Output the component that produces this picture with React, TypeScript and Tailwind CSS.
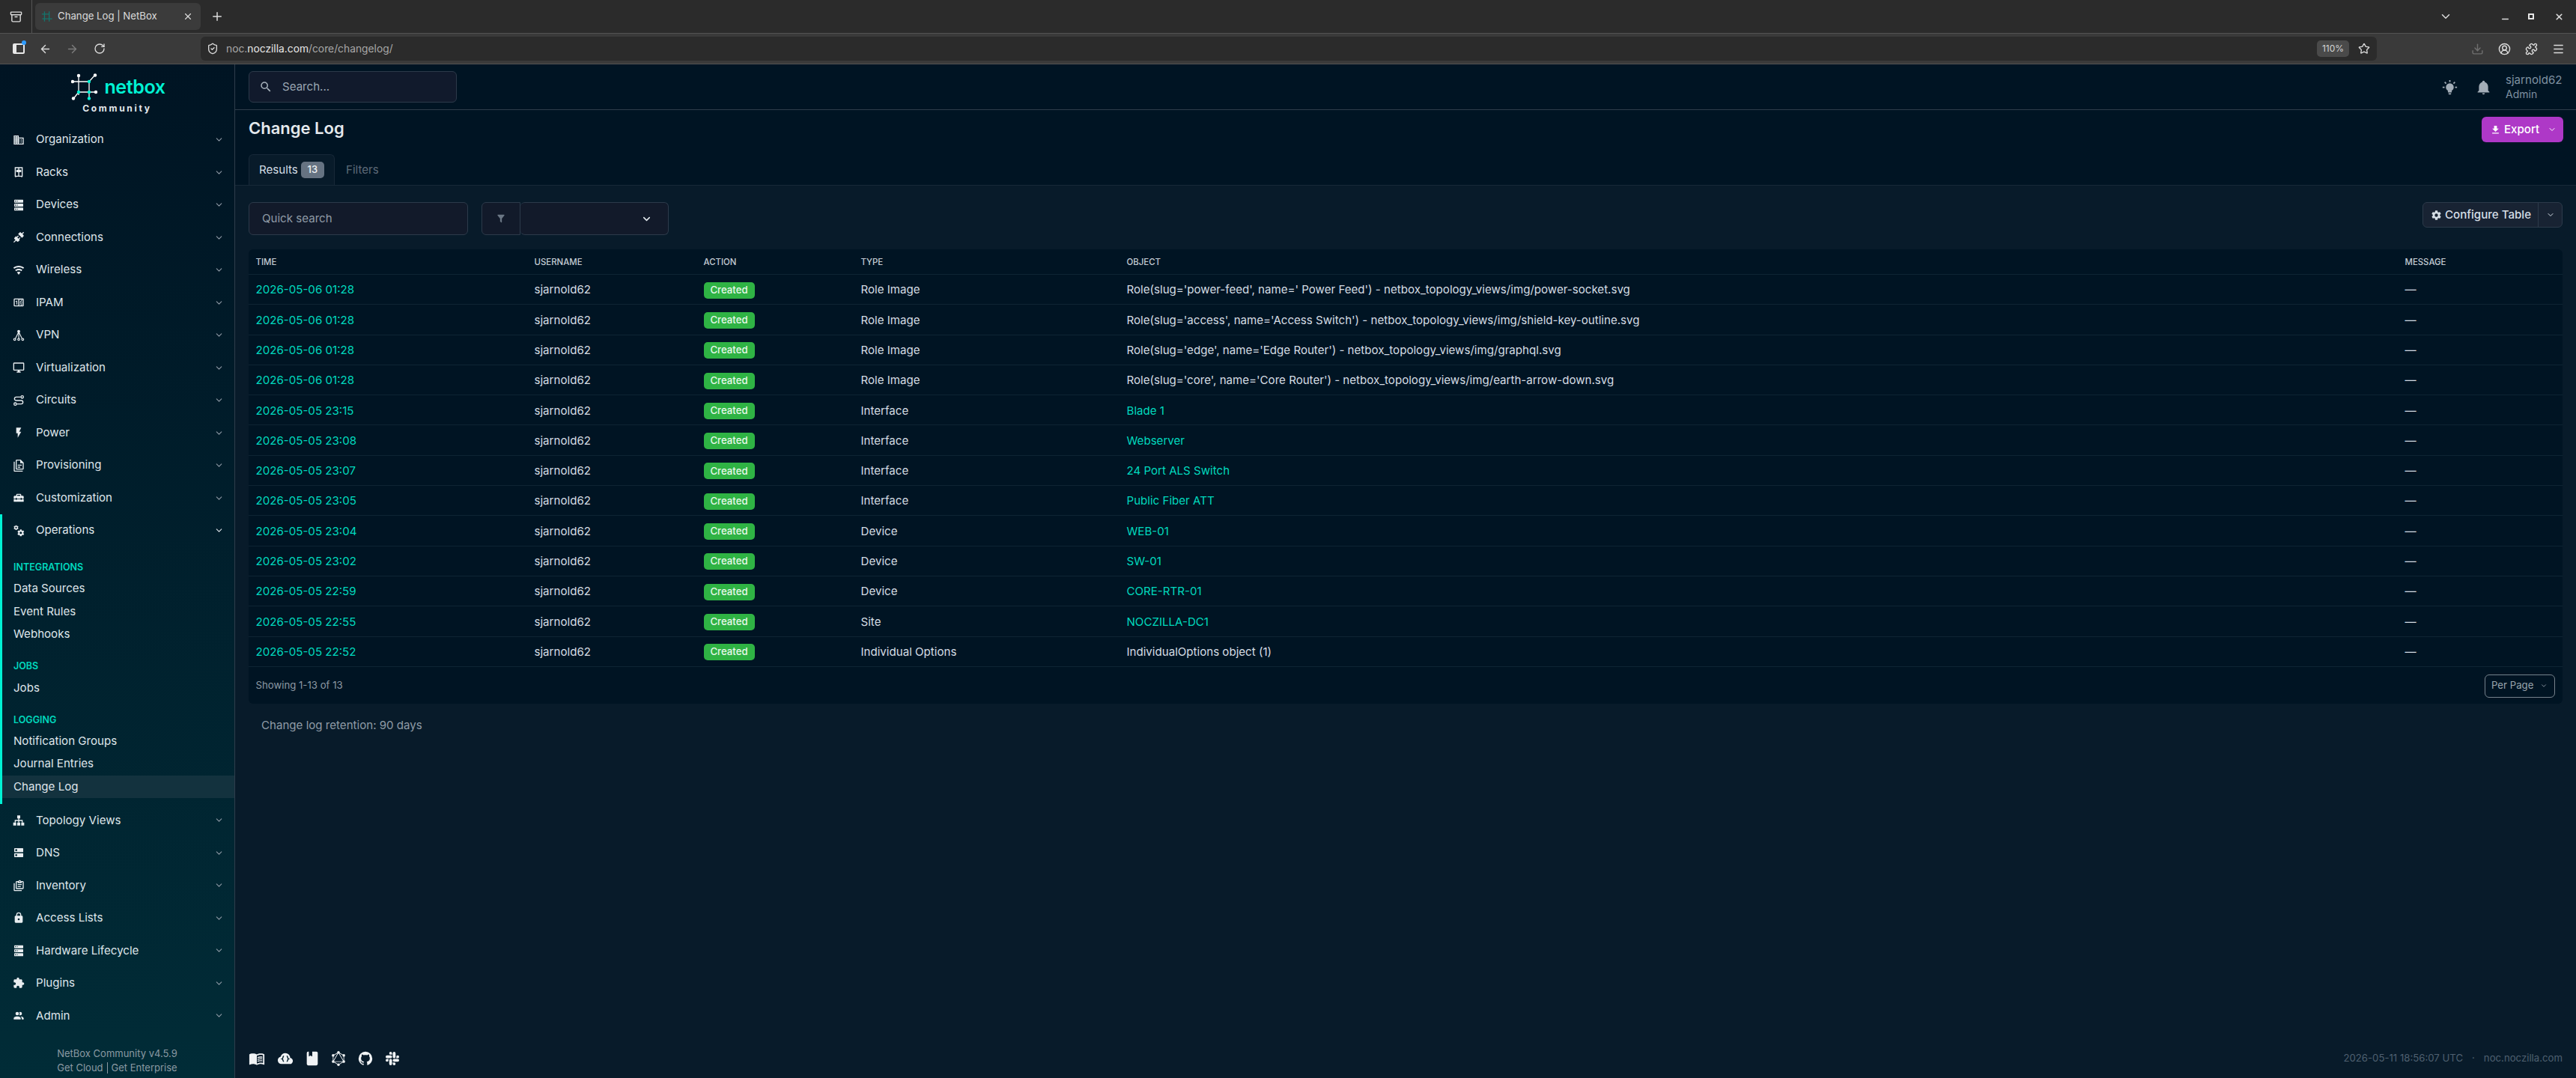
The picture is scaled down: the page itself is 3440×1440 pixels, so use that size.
import { ChevronDown, ArrowLeft, ArrowRight, RotateCw, Plus, X, Star, Download, CircleUserRound, Puzzle, Menu, ShieldCheck, Archive, Minus } from "lucide-react";
import { SiGraphql, SiSlack } from "react-icons/si";

const P = {
  domain: "M18,15H16V17H18M18,11H16V13H18M20,19H12V17H14V15H12V13H14V11H12V9H20M10,7H8V5H10M10,11H8V9H10M10,15H8V13H10M10,19H8V17H10M6,7H4V5H6M6,11H4V9H6M6,15H4V13H6M6,19H4V17H6M12,7V3H2V21H22V7H12Z",
  server: "M4,1H20A1,1 0 0,1 21,2V6A1,1 0 0,1 20,7H4A1,1 0 0,1 3,6V2A1,1 0 0,1 4,1M4,9H20A1,1 0 0,1 21,10V14A1,1 0 0,1 20,15H4A1,1 0 0,1 3,14V10A1,1 0 0,1 4,9M4,17H20A1,1 0 0,1 21,18V22A1,1 0 0,1 20,23H4A1,1 0 0,1 3,22V18A1,1 0 0,1 4,17M9,5H10V3H9V5M9,13H10V11H9V13M9,21H10V19H9V21M5,3V5H7V3H5M5,11V13H7V11H5M5,19V21H7V19H5Z",
  connection: "M21.4 7.5C22.2 8.3 22.2 9.6 21.4 10.3L18.6 13.1L10.8 5.3L13.6 2.5C14.4 1.7 15.7 1.7 16.4 2.5L18.2 4.3L21.2 1.3L22.6 2.7L19.6 5.7L21.4 7.5M15.6 13.3L14.2 11.9L11.4 14.7L9.3 12.6L12.1 9.8L10.7 8.4L7.9 11.2L6.4 9.8L3.6 12.6C2.8 13.4 2.8 14.7 3.6 15.4L5.4 17.2L1.4 21.2L2.8 22.6L6.8 18.6L8.6 20.4C9.4 21.2 10.7 21.2 11.4 20.4L14.2 17.6L12.8 16.2L15.6 13.3Z",
  wifi: "M12,21L15.6,16.2C14.6,15.45 13.35,15 12,15C10.65,15 9.4,15.45 8.4,16.2L12,21M12,3C7.95,3 4.21,4.34 1.2,6.6L3,9C5.5,7.12 8.62,6 12,6C15.38,6 18.5,7.12 21,9L22.8,6.6C19.79,4.34 16.05,3 12,3M12,9C9.3,9 6.81,9.89 4.8,11.4L6.6,13.8C8.1,12.67 9.97,12 12,12C14.03,12 15.9,12.67 17.4,13.8L19.2,11.4C17.19,9.89 14.7,9 12,9Z",
  counter: "M4,4H20A2,2 0 0,1 22,6V18A2,2 0 0,1 20,20H4A2,2 0 0,1 2,18V6A2,2 0 0,1 4,4M4,6V18H11V6H4M20,18V6H18.76C19,6.54 18.95,7.07 18.95,7.13C18.88,7.8 18.41,8.5 18.24,8.75L15.91,11.3L19.23,11.28L19.24,12.5L14.04,12.47L14,11.47C14,11.47 17.05,8.24 17.2,7.95C17.34,7.67 17.91,6 16.5,6C15.27,6.05 15.41,7.3 15.41,7.3L13.87,7.31C13.87,7.31 13.88,6.65 14.25,6H13V18H15.58L15.57,17.14L16.54,17.13C16.54,17.13 17.45,16.97 17.46,16.08C17.5,15.08 16.65,15.08 16.5,15.08C16.37,15.08 15.43,15.13 15.43,15.95H13.91C13.91,15.95 13.95,13.89 16.5,13.89C19.1,13.89 18.96,15.91 18.96,15.91C18.96,15.91 19,17.16 17.85,17.63L18.37,18H20M8.92,16H7.42V10.2L5.62,10.76V9.53L8.76,8.41H8.92V16Z",
  monitor: "M21,16H3V4H21M21,2H3C1.89,2 1,2.89 1,4V16A2,2 0 0,0 3,18H10V20H8V22H16V20H14V18H21A2,2 0 0,0 23,16V4C23,2.89 22.1,2 21,2Z",
  flash: "M7,2V13H10V22L17,10H13L17,2H7Z",
  files: "M16 0H8C6.9 0 6 .9 6 2V18C6 19.1 6.9 20 8 20H20C21.1 20 22 19.1 22 18V6L16 0M20 18H8V2H15V7H20V18M4 4V22H20V24H4C2.9 24 2 23.1 2 22V4H4M10 10V12H18V10H10M10 14V16H15V14H10Z",
  toolbox: "M18 16H16V15H8V16H6V15H2V20H22V15H18V16M20 8H17V6C17 4.9 16.1 4 15 4H9C7.9 4 7 4.9 7 6V8H4C2.9 8 2 8.9 2 10V14H6V12H8V14H16V12H18V14H22V10C22 8.9 21.1 8 20 8M15 8H9V6H15V8Z",
  dns: "M7,9A2,2 0 0,1 5,7A2,2 0 0,1 7,5A2,2 0 0,1 9,7A2,2 0 0,1 7,9M20,3H4A1,1 0 0,0 3,4V10A1,1 0 0,0 4,11H20A1,1 0 0,0 21,10V4A1,1 0 0,0 20,3M7,19A2,2 0 0,1 5,17A2,2 0 0,1 7,15A2,2 0 0,1 9,17A2,2 0 0,1 7,19M20,13H4A1,1 0 0,0 3,14V20A1,1 0 0,0 4,21H20A1,1 0 0,0 21,20V14A1,1 0 0,0 20,13Z",
  clipboard: "M4 7V21H18V23H4C2.9 23 2 22.1 2 21V7H4M20 3C21.1 3 22 3.9 22 5V17C22 18.1 21.1 19 20 19H8C6.9 19 6 18.1 6 17V5C6 3.9 6.9 3 8 3H11.18C11.6 1.84 12.7 1 14 1C15.3 1 16.4 1.84 16.82 3H20M14 3C13.45 3 13 3.45 13 4C13 4.55 13.45 5 14 5C14.55 5 15 4.55 15 4C15 3.45 14.55 3 14 3M10 7V5H8V17H20V5H18V7H10M18 11H10V9H18V11M16 15H10V13H16V15Z",
  lock: "M12,17A2,2 0 0,0 14,15C14,13.89 13.1,13 12,13A2,2 0 0,0 10,15A2,2 0 0,0 12,17M18,8A2,2 0 0,1 20,10V20A2,2 0 0,1 18,22H6A2,2 0 0,1 4,20V10C4,8.89 4.9,8 6,8H7V6A5,5 0 0,1 12,1A5,5 0 0,1 17,6V8H18M12,3A3,3 0 0,0 9,6V8H15V6A3,3 0 0,0 12,3Z",
  puzzle: "M20.5,11H19V7C19,5.89 18.1,5 17,5H13V3.5A2.5,2.5 0 0,0 10.5,1A2.5,2.5 0 0,0 8,3.5V5H4A2,2 0 0,0 2,7V10.8H3.5C5,10.8 6.2,12 6.2,13.5C6.2,15 5,16.2 3.5,16.2H2V20A2,2 0 0,0 4,22H7.8V20.5C7.8,19 9,17.8 10.5,17.8C12,17.8 13.2,19 13.2,20.5V22H17A2,2 0 0,0 19,20V16H20.5A2.5,2.5 0 0,0 23,13.5A2.5,2.5 0 0,0 20.5,11Z",
  people: "M16 17V19H2V17S2 13 9 13 16 17 16 17M12.5 7.5A3.5 3.5 0 1 0 9 11A3.5 3.5 0 0 0 12.5 7.5M15.94 13A5.32 5.32 0 0 1 18 17V19H22V17S22 13.37 15.94 13M15 4A3.39 3.39 0 0 0 13.07 4.59A5 5 0 0 1 13.07 10.41A3.39 3.39 0 0 0 15 11A3.5 3.5 0 0 0 15 4Z",
  cog: "M12,15.5A3.5,3.5 0 0,1 8.5,12A3.5,3.5 0 0,1 12,8.5A3.5,3.5 0 0,1 15.5,12A3.5,3.5 0 0,1 12,15.5M19.43,12.97C19.47,12.65 19.5,12.33 19.5,12C19.5,11.67 19.47,11.34 19.43,11L21.54,9.37C21.73,9.22 21.78,8.95 21.66,8.73L19.66,5.27C19.54,5.05 19.27,4.96 19.05,5.05L16.56,6.05C16.04,5.66 15.5,5.32 14.87,5.07L14.5,2.42C14.46,2.18 14.25,2 14,2H10C9.75,2 9.54,2.18 9.5,2.42L9.13,5.07C8.5,5.32 7.96,5.66 7.44,6.05L4.95,5.05C4.73,4.96 4.46,5.05 4.34,5.27L2.34,8.73C2.21,8.95 2.27,9.22 2.46,9.37L4.57,11C4.53,11.34 4.5,11.67 4.5,12C4.5,12.33 4.53,12.65 4.57,12.97L2.46,14.63C2.27,14.78 2.21,15.05 2.34,15.27L4.34,18.73C4.46,18.95 4.73,19.03 4.95,18.95L7.44,17.94C7.96,18.34 8.5,18.68 9.13,18.93L9.5,21.58C9.54,21.82 9.75,22 10,22H14C14.25,22 14.46,21.82 14.5,21.58L14.87,18.93C15.5,18.67 16.04,18.34 16.56,17.94L19.05,18.95C19.27,19.03 19.54,18.95 19.66,18.73L21.66,15.27C21.78,15.05 21.73,14.78 21.54,14.63L19.43,12.97Z",
  book: "M12 21.5C10.65 20.65 8.2 20 6.5 20C4.85 20 3.15 20.3 1.75 21.05C1.65 21.1 1.6 21.1 1.5 21.1C1.25 21.1 1 20.85 1 20.6V6C1.6 5.55 2.25 5.25 3 5C4.11 4.65 5.33 4.5 6.5 4.5C8.45 4.5 10.55 4.9 12 6C13.45 4.9 15.55 4.5 17.5 4.5C18.67 4.5 19.89 4.65 21 5C21.75 5.25 22.4 5.55 23 6V20.6C23 20.85 22.75 21.1 22.5 21.1C22.4 21.1 22.35 21.1 22.25 21.05C20.85 20.3 19.15 20 17.5 20C15.8 20 13.35 20.65 12 21.5M12 8V19.5C13.35 18.65 15.8 18 17.5 18C18.7 18 19.9 18.15 21 18.5V7C19.9 6.65 18.7 6.5 17.5 6.5C15.8 6.5 13.35 7.15 12 8M13 11.5C14.11 10.82 15.6 10.5 17.5 10.5C18.41 10.5 19.26 10.59 20 10.78V9.23C19.13 9.08 18.29 9 17.5 9C15.73 9 14.23 9.28 13 9.84V11.5M17.5 11.67C15.79 11.67 14.29 11.93 13 12.46V14.15C14.11 13.5 15.6 13.16 17.5 13.16C18.54 13.16 19.38 13.24 20 13.4V11.9C19.13 11.74 18.29 11.67 17.5 11.67M20 14.57C19.13 14.41 18.29 14.33 17.5 14.33C15.67 14.33 14.17 14.6 13 15.13V16.82C14.11 16.16 15.6 15.83 17.5 15.83C18.54 15.83 19.38 15.91 20 16.07V14.57Z",
  bookmark: "M18,22A2,2 0 0,0 20,20V4C20,2.89 19.1,2 18,2H12V9L9.5,7.5L7,9V2H6A2,2 0 0,0 4,4V20A2,2 0 0,0 6,22H18Z",
  github: "M12,2A10,10 0 0,0 2,12C2,16.42 4.87,20.17 8.84,21.5C9.34,21.58 9.5,21.27 9.5,21C9.5,20.77 9.5,20.14 9.5,19.31C6.73,19.91 6.14,17.97 6.14,17.97C5.68,16.81 5.03,16.5 5.03,16.5C4.12,15.88 5.1,15.9 5.1,15.9C6.1,15.97 6.63,16.93 6.63,16.93C7.5,18.45 8.97,18 9.54,17.76C9.63,17.11 9.89,16.67 10.17,16.42C7.95,16.17 5.62,15.31 5.62,11.5C5.62,10.39 6,9.5 6.65,8.79C6.55,8.54 6.2,7.5 6.75,6.15C6.75,6.15 7.59,5.88 9.5,7.17C10.29,6.95 11.15,6.84 12,6.84C12.85,6.84 13.71,6.95 14.5,7.17C16.41,5.88 17.25,6.15 17.25,6.15C17.8,7.5 17.45,8.54 17.35,8.79C18,9.5 18.38,10.39 18.38,11.5C18.38,15.32 16.04,16.16 13.81,16.41C14.17,16.72 14.5,17.33 14.5,18.26C14.5,19.6 14.5,20.68 14.5,21C14.5,21.27 14.66,21.59 15.17,21.5C19.14,20.16 22,16.42 22,12A10,10 0 0,0 12,2Z",
  bulb: "M12,6A6,6 0 0,1 18,12C18,14.22 16.79,16.16 15,17.2V19A1,1 0 0,1 14,20H10A1,1 0 0,1 9,19V17.2C7.21,16.16 6,14.22 6,12A6,6 0 0,1 12,6M14,21V22A1,1 0 0,1 13,23H11A1,1 0 0,1 10,22V21H14M20,11H23V13H20V11M1,11H4V13H1V11M13,1V4H11V1H13M4.92,3.5L7.05,5.64L5.63,7.05L3.5,4.93L4.92,3.5M16.95,5.63L19.07,3.5L20.5,4.93L18.37,7.05L16.95,5.63Z",
  bell: "M21,19V20H3V19L5,17V11C5,7.9 7.03,5.17 10,4.29C10,4.19 10,4.1 10,4A2,2 0 0,1 12,2A2,2 0 0,1 14,4C14,4.1 14,4.19 14,4.29C16.97,5.17 19,7.9 19,11V17L21,19M14,21A2,2 0 0,1 12,23A2,2 0 0,1 10,21",
  download: "M5,20H19V18H5M19,9H15V3H9V9H5L12,16L19,9Z",
  magnify: "M9.5,3A6.5,6.5 0 0,1 16,9.5C16,11.11 15.41,12.59 14.44,13.73L14.71,14H15.5L20.5,19L19,20.5L14,15.5V14.71L13.73,14.44C12.59,15.41 11.11,16 9.5,16A6.5,6.5 0 0,1 3,9.5A6.5,6.5 0 0,1 9.5,3M9.5,5C7,5 5,7 5,9.5C5,12 7,14 9.5,14C12,14 14,12 14,9.5C14,7 12,5 9.5,5Z",
  filter: "M14,12V19.88C14.04,20.18 13.94,20.5 13.71,20.71C13.32,21.1 12.69,21.1 12.3,20.71L10.29,18.7C10.06,18.47 9.96,18.16 10,17.87V12H9.97L4.21,4.62C3.87,4.19 3.95,3.56 4.38,3.22C4.57,3.08 4.78,3 5,3H19C19.22,3 19.43,3.08 19.62,3.22C20.05,3.56 20.13,4.19 19.79,4.62L14.03,12H14Z",
};

const Mdi = ({ d, size = 16, className = "" }: { d: string; size?: number; className?: string }) => (
  <svg viewBox="0 0 24 24" width={size} height={size} fill="currentColor" className={className}>
    <path d={d} />
  </svg>
);

const Racks = () => (
  <svg viewBox="0 0 24 24" width={16} height={16} fill="none" stroke="currentColor" strokeWidth="2">
    <path d="M5 3h14v17H5zM12 3v17M6 20v2M18 20v2M8 8h2v3H8zM14 8h2v3h-2z" />
  </svg>
);

const Vpn = () => (
  <svg viewBox="0 0 24 24" width={16} height={16} fill="none" stroke="currentColor" strokeWidth="1.7">
    <path d="M12 5L5 19M12 5l7 14M12 5v14" />
    <circle cx="12" cy="4" r="2" fill="currentColor" />
    <circle cx="4" cy="20" r="2" />
    <circle cx="12" cy="20" r="2" />
    <circle cx="20" cy="20" r="2" />
  </svg>
);

const Circuits = () => (
  <svg viewBox="0 0 24 24" width={16} height={16} fill="none" stroke="currentColor" strokeWidth="2">
    <path d="M16 5H7a3.5 3.5 0 0 0 0 7h10a3.5 3.5 0 0 1 0 7H8" />
    <circle cx="19" cy="5" r="2.5" />
    <circle cx="5" cy="19" r="2.5" />
  </svg>
);

const Cogs = () => (
  <svg viewBox="0 0 24 24" width={16} height={16} fill="currentColor">
    <g transform="translate(1 0) scale(0.48)"><path d={P.cog} /></g>
    <g transform="translate(8 8) scale(0.68)"><path d={P.cog} /></g>
  </svg>
);

const Sitemap = () => (
  <svg viewBox="0 0 24 24" width={16} height={16} fill="currentColor">
    <path d="M9 2h6v6H9zM11 8h2v3h7v5h-2v-3h-5v3h-2v-3H6v3H4v-5h7z" />
    <path d="M1 16h6v6H1zM9 16h6v6H9zM17 16h6v6h-6z" />
  </svg>
);

const CloudBraces = () => (
  <svg viewBox="0 0 24 24" width={22} height={22}>
    <path fill="currentColor" d="M6.5 20Q4.22 20 2.61 18.43 1 16.85 1 14.58 1 12.63 2.17 11.1 3.35 9.57 5.25 9.15 5.88 6.85 7.75 5.43 9.63 4 12 4 14.93 4 16.96 6.04 19 8.07 19 11 20.73 11.2 21.86 12.5 23 13.78 23 15.5 23 17.38 21.69 18.69 20.38 20 18.5 20Z" />
    <path fill="none" stroke="#06202c" strokeWidth="1.6" d="M10 8.5c-2 0-1 3.5-2.5 4 1.5.5.5 4 2.5 4M14 8.5c2 0 1 3.5 2.5 4-1.5.5-.5 4-2.5 4" />
  </svg>
);

const Logo = () => (
  <svg viewBox="0 0 36 36" width={36} height={36} fill="none">
    <g stroke="#ffffff" strokeWidth="1.3">
      <path d="M10 3v26M2 11h22M24 11v24M10 25h23M24 11l8-9M10 25l-7 9" />
    </g>
    <circle cx="10" cy="3" r="2.2" fill="#fff" />
    <circle cx="2" cy="11" r="2.2" fill="#fff" />
    <circle cx="24" cy="11" r="2.2" fill="#00f2d4" />
    <circle cx="32" cy="2.5" r="2.2" fill="#fff" />
    <circle cx="10" cy="25" r="2.2" fill="#00f2d4" />
    <circle cx="24" cy="25" r="2.2" fill="#00f2d4" />
    <circle cx="33" cy="25" r="2.2" fill="#fff" />
    <circle cx="3" cy="33.5" r="2.2" fill="#fff" />
    <circle cx="24" cy="33.5" r="2.2" fill="#00f2d4" />
  </svg>
);

const topNav = [
  { label: "Organization", icon: <Mdi d={P.domain} /> },
  { label: "Racks", icon: <Racks /> },
  { label: "Devices", icon: <Mdi d={P.server} /> },
  { label: "Connections", icon: <Mdi d={P.connection} /> },
  { label: "Wireless", icon: <Mdi d={P.wifi} /> },
  { label: "IPAM", icon: <Mdi d={P.counter} /> },
  { label: "VPN", icon: <Vpn /> },
  { label: "Virtualization", icon: <Mdi d={P.monitor} /> },
  { label: "Circuits", icon: <Circuits /> },
  { label: "Power", icon: <Mdi d={P.flash} /> },
  { label: "Provisioning", icon: <Mdi d={P.files} /> },
  { label: "Customization", icon: <Mdi d={P.toolbox} /> },
];

const bottomNav = [
  { label: "Topology Views", icon: <Sitemap /> },
  { label: "DNS", icon: <Mdi d={P.dns} /> },
  { label: "Inventory", icon: <Mdi d={P.clipboard} /> },
  { label: "Access Lists", icon: <Mdi d={P.lock} /> },
  { label: "Hardware Lifecycle", icon: <Mdi d={P.server} /> },
  { label: "Plugins", icon: <Mdi d={P.puzzle} /> },
  { label: "Admin", icon: <Mdi d={P.people} /> },
];

const groups = [
  { title: "INTEGRATIONS", items: ["Data Sources", "Event Rules", "Webhooks"] },
  { title: "JOBS", items: ["Jobs"] },
  { title: "LOGGING", items: ["Notification Groups", "Journal Entries", "Change Log"] },
];

const rows = [
  ["2026-05-06 01:28", "Role Image", "Role(slug='power-feed', name=' Power Feed') - netbox_topology_views/img/power-socket.svg", false],
  ["2026-05-06 01:28", "Role Image", "Role(slug='access', name='Access Switch') - netbox_topology_views/img/shield-key-outline.svg", false],
  ["2026-05-06 01:28", "Role Image", "Role(slug='edge', name='Edge Router') - netbox_topology_views/img/graphql.svg", false],
  ["2026-05-06 01:28", "Role Image", "Role(slug='core', name='Core Router') - netbox_topology_views/img/earth-arrow-down.svg", false],
  ["2026-05-05 23:15", "Interface", "Blade 1", true],
  ["2026-05-05 23:08", "Interface", "Webserver", true],
  ["2026-05-05 23:07", "Interface", "24 Port ALS Switch", true],
  ["2026-05-05 23:05", "Interface", "Public Fiber ATT", true],
  ["2026-05-05 23:04", "Device", "WEB-01", true],
  ["2026-05-05 23:02", "Device", "SW-01", true],
  ["2026-05-05 22:59", "Device", "CORE-RTR-01", true],
  ["2026-05-05 22:55", "Site", "NOCZILLA-DC1", true],
  ["2026-05-05 22:52", "Individual Options", "IndividualOptions object (1)", false],
] as const;

const NavItem = ({ label, icon, open }: { label: string; icon: React.ReactNode; open?: boolean }) => (
  <div className="flex h-[43.5px] items-center pl-[17px] pr-[14px] text-[15.1px] text-[#dfe5ea]">
    <span className="flex w-[31px] shrink-0 text-[#e8edf0]">{icon}</span>
    <span className="flex-1">{label}</span>
    <ChevronDown size={13} className={open ? "text-[#dfe5ea]" : "text-[#8d99a5]"} />
  </div>
);

const Sidebar = () => (
  <aside className="flex w-[314px] shrink-0 flex-col border-r border-[#2f3d4b] bg-linear-to-b from-[#001423] to-[#012c37]">
    <div className="flex h-[79px] flex-col items-center pt-[12px]">
      <div className="flex items-center gap-[8px] pl-[3px]">
        <Logo />
        <span className="text-[25px] leading-[32px] font-semibold tracking-[-0.4px] text-[#00f2d4]">netbox</span>
      </div>
      <span className="mt-[3px] text-[12px] leading-[16px] font-bold tracking-[2.7px] text-[#e4e9ed]">Community</span>
    </div>
    {topNav.map((n) => (
      <NavItem key={n.label} {...n} />
    ))}
    <div className="border-l-[3px] border-[#00f2d4] pb-[8px]">
      <div className="-ml-[3px]">
        <NavItem label="Operations" icon={<Cogs />} open />
      </div>
      {groups.map((g) => (
        <div key={g.title} className="mt-[15px]">
          <div className="flex h-[26px] items-center pl-[15px] text-[12.5px] font-semibold text-[#00d9be]">{g.title}</div>
          {g.items.map((i) => (
            <div key={i} className={`flex h-[30.4px] items-center pl-[15px] text-[15.1px] text-[#dfe5ea] ${i === "Change Log" ? "bg-[#13323e]" : ""}`}>
              {i}
            </div>
          ))}
        </div>
      ))}
    </div>
    {bottomNav.map((n) => (
      <NavItem key={n.label} {...n} />
    ))}
    <div className="mt-auto flex flex-col items-center pb-[4px] text-[13px] leading-[19px] text-[#8b9aa3]">
      <span>NetBox Community v4.5.9</span>
      <span className="flex items-center">
        Get Cloud<span className="mx-[5px] inline-block h-[15px] w-px bg-[#8b9aa3]" />Get Enterprise
      </span>
    </div>
  </aside>
);

const TabBar = () => (
  <div className="flex h-[45px] items-center border-b border-[#525252] bg-[#2b2b2b] text-[#dcdcdc]">
    <div className="flex h-full w-[43px] items-center justify-center border-r border-[#555]">
      <Archive size={17} />
    </div>
    <div className="ml-[4px] flex h-[36px] w-[221px] items-center rounded-[6px] bg-[#3b3b3b] pl-[8px] pr-[10px]">
      <svg viewBox="0 0 36 36" width={16} height={16} fill="none" stroke="#14746c" strokeWidth="3">
        <path d="M10 3v30M2 11h22M24 3v30M3 25h30" />
      </svg>
      <span className="ml-[6px] flex-1 text-[13.2px]">Change Log | NetBox</span>
      <X size={14} />
    </div>
    <Plus size={18} className="ml-[13px]" />
    <div className="flex-1" />
    <ChevronDown size={18} className="mr-[64px]" />
    <Minus size={13} strokeWidth={3} className="mr-[24px] mt-[6px]" />
    <div className="mr-[27px] h-[8px] w-[8px] border-2 border-[#e5e5e5]" />
    <X size={13} strokeWidth={3} className="mr-[16px]" />
  </div>
);

const Toolbar = () => (
  <div className="flex h-[41px] items-center border-b border-[#525252] bg-[#3a3a3a] text-[#dcdcdc]">
    <div className="relative ml-[17px] h-[14px] w-[16px] rounded-[2px] border-2 border-[#e8e8e8] border-l-[5px]">
      <span className="absolute -right-[4px] -top-[6px] h-[6px] w-[6px] rounded-full bg-[#2f9bff]" />
    </div>
    <ArrowLeft size={17} className="ml-[19px]" />
    <ArrowRight size={17} className="ml-[19px] text-[#7c7c7c]" />
    <RotateCw size={16} className="ml-[20px]" />
    <div className="ml-[127px] flex h-[32px] flex-1 items-center rounded-[6px] bg-[#2b2b2b] pl-[8px] pr-[6px]">
      <ShieldCheck size={16} />
      <span className="ml-[10px] text-[13.8px] text-[#a8a8a8]">
        noc.<span className="text-[#e8e8e8]">noczilla.com</span>/core/changelog/
      </span>
      <div className="flex-1" />
      <span className="flex h-[22px] w-[43px] items-center justify-center rounded-[5px] bg-[#4a4a4a] text-[12px] text-[#d4d4d4]">110%</span>
      <Star size={16} className="ml-[12px] mr-[3px]" />
    </div>
    <Download size={17} className="ml-[126px] text-[#6f6f6f]" />
    <CircleUserRound size={17} className="ml-[19px]" />
    <Puzzle size={17} className="ml-[19px]" />
    <Menu size={17} className="ml-[19px] mr-[15px]" />
  </div>
);

const TableGrid = ({ children, className }: { children: React.ReactNode; className: string }) => (
  <div className={`grid grid-cols-[372px_226px_210px_355px_1707px_1fr] items-center pl-[9.5px] pt-[2px] ${className}`}>{children}</div>
);

const Main = () => (
  <main className="flex min-w-0 flex-1 flex-col bg-[#001423]">
    <div className="flex h-[61px] shrink-0 items-center border-b border-[#2f3d4b] pl-[18px] pr-[18px]">
      <div className="flex h-[42px] w-[278px] items-center rounded-[6px] border border-[#2c3a4a] bg-[#111a2c] pl-[13px] text-[15.1px] text-[#9aa6b2]">
        <Mdi d={P.magnify} size={18} className="text-[#a7b2bc]" />
        <span className="ml-[13px]">Search...</span>
      </div>
      <div className="flex-1" />
      <Mdi d={P.bulb} size={21} className="text-[#a3adb7]" />
      <Mdi d={P.bell} size={21} className="ml-[24px] text-[#a3adb7]" />
      <div className="ml-[19px] flex w-[76px] flex-col text-[15.1px] leading-[19px] text-[#7f91a1]">
        <span>sjarnold62</span>
        <span className="text-[14px]">Admin</span>
      </div>
    </div>
    <div className="flex h-[60px] shrink-0 items-start justify-between pl-[18px] pr-[17px]">
      <h1 className="mt-[9px] text-[22px] leading-[30px] font-semibold text-[#e4e9ed]">Change Log</h1>
      <div className="mt-[9px] flex h-[34px] w-[109px] items-center rounded-[6px] bg-[#ae38c7] pl-[11px] text-[15.1px] font-medium text-white">
        <Mdi d={P.download} size={15} />
        <span className="ml-[4px] flex-1">Export</span>
        <ChevronDown size={12} className="mr-[9px]" />
      </div>
    </div>
    <div className="flex h-[40px] shrink-0 items-end pl-[18px] text-[15.1px]">
      <div className="flex h-[41px] w-[115px] items-center rounded-t-[6px] border border-b-0 border-[#172838] bg-[#081b2a] pl-[13px] text-[#d4dde5]">
        Results
        <span className="ml-[4px] flex h-[22px] w-[31px] items-center justify-center rounded-[5px] bg-[#667382] text-[13px] font-medium text-[#f0f3f5]">13</span>
      </div>
      <span className="flex h-[40px] items-center pl-[15px] text-[#5d6a78]">Filters</span>
    </div>
    <div className="flex min-h-0 flex-1 flex-col border-t border-[#172838] bg-[#081b2a] pl-[18px] pr-[18px]">
      <div className="mt-[22px] flex h-[44px] shrink-0 items-start text-[15.1px]">
        <div className="flex h-full w-[293px] items-center rounded-[6px] border border-[#2c3a4a] bg-[#121a2a] pl-[17px] text-[#8f9ba6]">Quick search</div>
        <div className="ml-[18px] flex h-full w-[52px] items-center justify-center rounded-l-[6px] border border-[#2c3a4a] bg-[#121a2a] text-[#6b7785]">
          <Mdi d={P.filter} size={14} />
        </div>
        <div className="flex h-full w-[198px] items-center justify-end rounded-[6px] border border-l-0 border-[#2c3a4a] bg-[#121a2a] pr-[21px] text-[#dfe5ea]">
          <ChevronDown size={15} strokeWidth={2.5} />
        </div>
        <div className="flex-1" />
        <div className="flex h-[34px] w-[187px] items-center rounded-[6px] border border-[#2c3a4a] bg-[#182333] font-medium text-[#d6dfe7]">
          <Mdi d={P.cog} size={15} className="ml-[10px]" />
          <span className="ml-[4px] w-[124px]">Configure Table</span>
          <span className="flex h-full flex-1 items-center justify-center border-l border-[#2c3a4a]">
            <ChevronDown size={12} />
          </span>
        </div>
      </div>
      <div className="mt-[19px] shrink-0 rounded-[6px] bg-[#001423]">
        <TableGrid className="h-[34px] border-b border-[#0e2433] text-[11.4px] font-medium text-[#c3ccd4]">
          <span>TIME</span>
          <span>USERNAME</span>
          <span>ACTION</span>
          <span>TYPE</span>
          <span>OBJECT</span>
          <span>MESSAGE</span>
        </TableGrid>
        {rows.map(([time, type, object, link], i) => (
          <TableGrid key={i} className="h-[40.3px] border-b border-[#0e2433] text-[15.1px] text-[#d5dde4]">
            <span className="text-[#00d9be]">{time}</span>
            <span>sjarnold62</span>
            <span className="flex h-[22px] w-[68px] items-center justify-center rounded-[5px] bg-[#2fb344] text-[13.2px] font-medium text-[#e9f8ec]">Created</span>
            <span>{type}</span>
            <span className={link ? "text-[#00d9be]" : ""}>{object}</span>
            <span>—</span>
          </TableGrid>
        ))}
        <div className="flex h-[49px] items-center justify-between pl-[9.5px] pr-[10px] pt-[2px]">
          <span className="text-[13.2px] text-[#8d99a3]">Showing 1-13 of 13</span>
          <div className="flex h-[31px] w-[94px] items-center justify-between rounded-[6px] border border-[#76828c] pl-[8px] pr-[9px] text-[13.2px] text-[#9aa5ae]">
            Per Page
            <ChevronDown size={10} />
          </div>
        </div>
      </div>
      <div className="mt-[19px] pl-[17px] text-[15.1px] leading-[20px] text-[#8f9ba6]">Change log retention: 90 days</div>
      <div className="mt-auto mb-[16px] flex h-[20px] items-center text-[13.2px] text-[#4f6070]">
        <span className="mr-[16px] text-[#f0f3f5]"><Mdi d={P.book} size={22} /></span>
        <span className="mr-[14px] text-[#f0f3f5]"><CloudBraces /></span>
        <span className="mr-[14px] text-[#f0f3f5]"><Mdi d={P.bookmark} size={22} /></span>
        <span className="mr-[15px] text-[#f0f3f5]"><SiGraphql size={20} /></span>
        <span className="mr-[16px] text-[#f0f3f5]"><Mdi d={P.github} size={22} /></span>
        <span className="text-[#f0f3f5]"><SiSlack size={18} /></span>
        <div className="flex-1" />
        <span>2026-05-11 18:56:07 UTC</span>
        <span className="mx-[12px]">·</span>
        <span>noc.noczilla.com</span>
      </div>
    </div>
  </main>
);

export default function App() {
  return (
    <div className="flex h-screen w-full flex-col overflow-hidden font-[Inter,sans-serif]">
      <TabBar />
      <Toolbar />
      <div className="flex min-h-0 flex-1">
        <Sidebar />
        <Main />
      </div>
    </div>
  );
}
